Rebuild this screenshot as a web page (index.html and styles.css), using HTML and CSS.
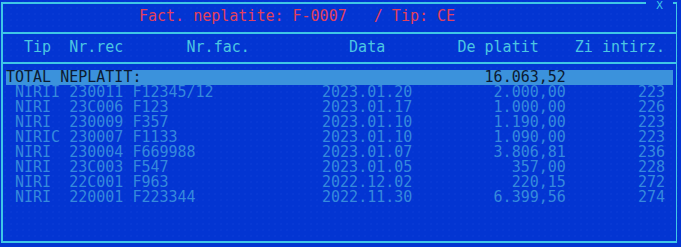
FILE: index.html
```html
<!DOCTYPE html>
<html lang="en">
<head>
<meta charset="UTF-8">
<title>Fact. neplatite</title>
<link rel="stylesheet" href="styles.css">
</head>
<body>
  <div class="window">
    <span class="close">X</span>
    <div class="title"><span class="title-text">Fact. neplatite: F-0007   / Tip: CE</span></div>
    <div class="head">
      <span class="h-tip">Tip</span>
      <span class="h-rec">Nr.rec</span>
      <span class="h-fac">Nr.fac.</span>
      <span class="h-data">Data</span>
      <span class="h-plat">De platit</span>
      <span class="h-zi">Zi intirz.</span>
    </div>
    <div class="list">
      <div class="total">
        <span>TOTAL NEPLATIT:</span>
        <span class="num">16.063,52</span>
      </div>
      <div id="rows"></div>
    </div>
  </div>

<script>
  // facturi neplatite
  var rows = [
    ["NIRII", "230011", "F12345/12", "2023.01.20", "2.000,00", "223"],
    ["NIRI", "23C006", "F123", "2023.01.17", "1.000,00", "226"],
    ["NIRI", "230009", "F357", "2023.01.10", "1.190,00", "223"],
    ["NIRIC", "230007", "F1133", "2023.01.10", "1.090,00", "223"],
    ["NIRI", "230004", "F669988", "2023.01.07", "3.806,81", "236"],
    ["NIRI", "23C003", "F547", "2023.01.05", "357,00", "228"],
    ["NIRI", "22C001", "F963", "2022.12.02", "220,15", "272"],
    ["NIRI", "220001", "F223344", "2022.11.30", "6.399,56", "274"]
  ];

  var box = document.getElementById("rows");
  rows.forEach(function(r) {
    var html = "<div class='row'>" +
      "<span>" + r[0] + "</span><span>" + r[1] + "</span><span>" + r[2] + "</span>" +
      "<span>" + r[3] + "</span><span class='num'>" + r[4] + "</span><span class='num'>" + r[5] + "</span></div>";
    box.innerHTML += html;
  });
</script>
</body>
</html>
```

FILE: styles.css
```css
body {
  margin: 0;
  padding: 0;
  font-family: "DejaVu Sans Mono", "Liberation Mono", monospace;
  font-size: 15px;
  background-color: #0335d2;
  background-image: radial-gradient(circle at center, rgba(60, 100, 235, 0.25) 0, rgba(60, 100, 235, 0.25) 0.5px, transparent 0.8px);
  background-size: 6px 6px;
  background-position: 2px 5px;
  height: 247px;
  overflow: hidden;
}
.window {
  position: relative;
  box-sizing: border-box;
  margin: 2px 0 0 1px;
  width: 676px;
  height: 241px;
  border: 2px solid #3fc6e6;
  border-right-width: 1.5px;
}
.close {
  position: absolute;
  top: -3px;
  left: 643px;
  width: 27px;
  text-align: center;
  font-size: 11px;
  line-height: 9px;
  color: #3fc6e6;
  background-color: #0335d2;
}
.title {
  box-sizing: border-box;
  height: 30px;
  line-height: 25px;
  padding-left: 136px;
  color: #e2405c;
  border-bottom: 2px solid #3fc6e6;
}
.title-text {
  white-space: pre;
}
.head {
  box-sizing: border-box;
  display: grid;
  grid-template-columns: 5ch 13ch 18ch 12ch 13ch auto;
  height: 30px;
  line-height: 26px;
  padding-left: calc(12px + 1ch);
  color: #4cc6e2;
  border-bottom: 2px solid #3fc6e6;
}
.list {
  padding: 6px 3px 0 12px;
}
.total {
  display: grid;
  grid-template-columns: 45ch 17ch;
  margin-left: -1ch;
  height: 15px;
  line-height: 15px;
  background-color: #3b92dc;
  color: #0b1a33;
}
.row {
  display: grid;
  grid-template-columns: 6ch 7ch 21ch 10ch 17ch 11ch;
  height: 15px;
  line-height: 15px;
  color: #3689dc;
  white-space: pre;
}
.num {
  text-align: right;
}
```
